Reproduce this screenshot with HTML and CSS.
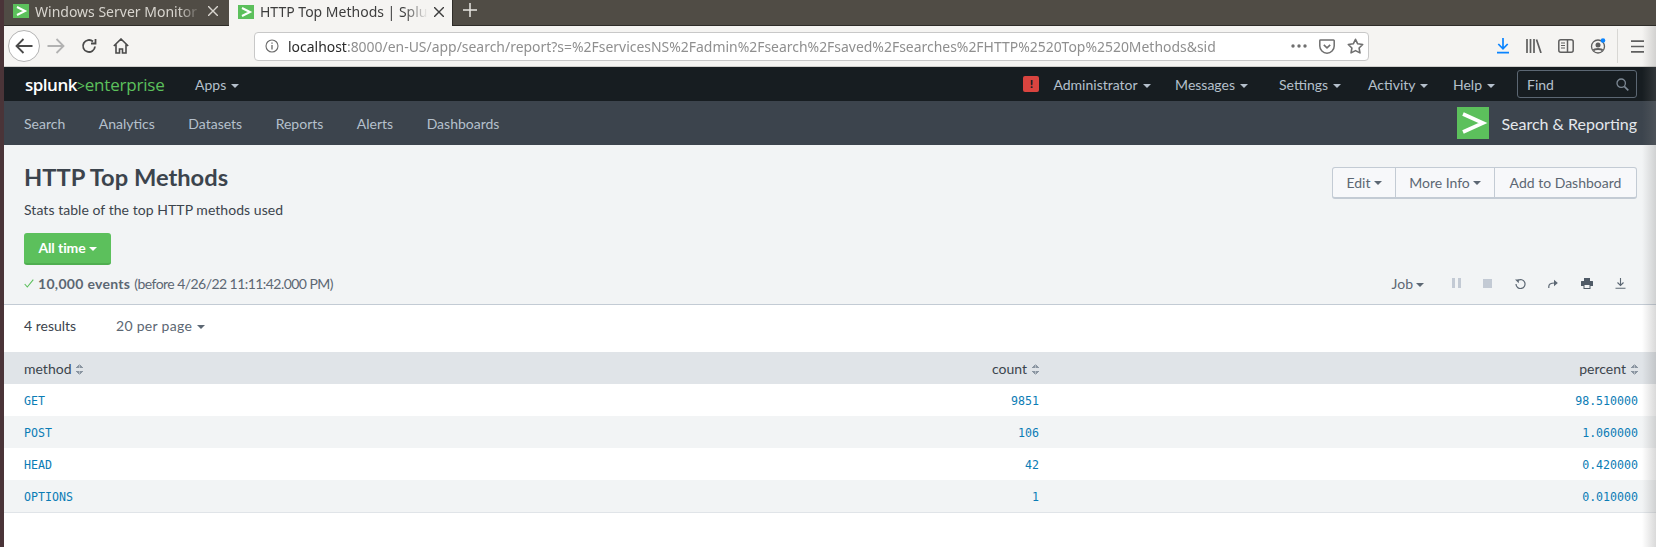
FILE: index.html
```html
<!DOCTYPE html>
<html lang="en">

<head>
  <meta charset="UTF-8">
  <title>HTTP Top Methods | Splunk</title>
  <link rel="stylesheet" href="styles.css">
</head>

<body>
  <div class="tabstrip">
    <div class="tab">
      <svg class="favicon" viewBox="0 0 16 14"><rect width="16" height="14" fill="#5cc05c"/><path d="M4 3l8 4-8 4" fill="none" stroke="#fff" stroke-width="2"/></svg>
      <span class="tab-title">Windows Server Monitor</span>
      <svg class="tab-close" viewBox="0 0 10 10"><path d="M0 0l10 10M10 0L0 10" stroke="currentColor" stroke-width="1.4"/></svg>
    </div>
    <div class="tab active">
      <svg class="favicon" viewBox="0 0 16 14"><rect width="16" height="14" fill="#5cc05c"/><path d="M4 3l8 4-8 4" fill="none" stroke="#fff" stroke-width="2"/></svg>
      <span class="tab-title">HTTP Top Methods | Splu</span>
      <svg class="tab-close" viewBox="0 0 10 10"><path d="M0 0l10 10M10 0L0 10" stroke="currentColor" stroke-width="1.4"/></svg>
    </div>
    <svg class="new-tab" viewBox="0 0 14 14"><path d="M7 0v14M0 7h14" stroke="#e8e6e2" stroke-width="1.5"/></svg>
  </div>

  <div class="toolbar">
    <div class="back-btn">
      <svg width="18" height="16" viewBox="0 0 18 16"><path d="M8.5 1L1.5 8l7 7M2 8h15.5" fill="none" stroke="#4a4a4a" stroke-width="1.8"/></svg>
    </div>
    <svg class="tool-forward" width="18" height="16" viewBox="0 0 18 16"><path d="M9.5 1l7 7-7 7M16 8H.5" fill="none" stroke="#b2b2b2" stroke-width="1.8"/></svg>
    <svg class="tool-reload" width="16" height="16" viewBox="0 0 16 16"><path d="M14 8.5A6 6 0 1 1 12 3.5M14.500 1v4.500H10" fill="none" stroke="#4a4a4a" stroke-width="1.8"/></svg>
    <svg class="tool-home" width="16" height="16" viewBox="0 0 16 16"><path d="M.8 8L8 1l7.2 7M3 6.5V15h3.5v-4h3v4H13V6.5" fill="none" stroke="#4a4a4a" stroke-width="1.6"/></svg>
    <div class="urlbar">
      <svg class="url-info" width="14" height="14" viewBox="0 0 14 14"><circle cx="7" cy="7" r="6" fill="none" stroke="#6a6a6a" stroke-width="1.1"/><path d="M7 6v4.4M7 3.4v1.4" stroke="#6a6a6a" stroke-width="1.3"/></svg>
      <div class="url-text"><span class="url-host">localhost</span>:8000/en-US/app/search/report?s=%2FservicesNS%2Fadmin%2Fsearch%2Fsaved%2Fsearches%2FHTTP%2520Top%2520Methods&amp;sid</div>
      <svg class="url-dots" width="16" height="4" viewBox="0 0 16 4"><circle cx="2" cy="2" r="1.7" fill="#6f6f6f"/><circle cx="8" cy="2" r="1.7" fill="#6f6f6f"/><circle cx="14" cy="2" r="1.7" fill="#6f6f6f"/></svg>
      <svg class="url-pocket" width="16" height="15" viewBox="0 0 16 15"><path d="M1.500 1h13a.7.7 0 0 1 .7.7V7a7.200 7.200 0 0 1-14.400 0V1.700A.7.7 0 0 1 1.500 1z" fill="none" stroke="#6f6f6f" stroke-width="1.5"/><path d="M4.800 5.800L8 8.800l3.200-3" fill="none" stroke="#6f6f6f" stroke-width="1.6"/></svg>
      <svg class="url-star" width="17" height="16" viewBox="0 0 17 16"><path d="M8.500 1.300l2.200 4.500 5 .7-3.600 3.500.85 4.900-4.450-2.300-4.450 2.300.85-4.900L1.300 6.500l5-.7z" fill="none" stroke="#6f6f6f" stroke-width="1.6" stroke-linejoin="round"/></svg>
    </div>
    <div class="tool-right">
      <svg width="14" height="16" viewBox="0 0 14 16"><path d="M7 0v10.500M2.300 6L7 10.800 11.700 6M1 14.700h12" fill="none" stroke="#0a84ff" stroke-width="1.7"/></svg>
      <svg width="16" height="14" viewBox="0 0 16 14"><path d="M1 0v14M4.500 0v14M8 0v14M10.500 .5l4.500 13.500" fill="none" stroke="#5f5f5f" stroke-width="1.7"/></svg>
      <svg width="16" height="14" viewBox="0 0 16 14"><rect x=".8" y=".8" width="14.400" height="12.400" rx="2" fill="none" stroke="#5f5f5f" stroke-width="1.5"/><path d="M9.500 1v12" stroke="#5f5f5f" stroke-width="1.5"/><path d="M3 4h4M3 6.500h4M3 9h4" stroke="#5f5f5f"/></svg>
      <svg width="16" height="16" viewBox="0 0 16 16"><circle cx="8" cy="8.500" r="6.500" fill="none" stroke="#5f5f5f" stroke-width="1.3"/><circle cx="8" cy="7" r="2.500" fill="#5f5f5f"/><path d="M3.500 12.500c1-2 8-2 9 0" fill="none" stroke="#5f5f5f" stroke-width="1.8"/><circle cx="13" cy="2.500" r="2.300" fill="#0a84ff"/></svg>
      <span class="tool-sep"></span>
      <svg class="tool-menu" width="13" height="13" viewBox="0 0 13 13"><path d="M0 1.200h13M0 6.500h13M0 11.800h13" stroke="#5f5f5f" stroke-width="1.7"/></svg>
    </div>
  </div>

  <div class="splunk-bar">
    <div class="logo">splunk<span class="logo-green"><span class="logo-gt">&gt;</span>enterprise</span></div>
    <div class="menu-item apps">Apps<i class="caret"></i></div>
    <div class="sys-nav">
      <span class="alert-badge">!</span>
      <div class="menu-item admin">Administrator<i class="caret"></i></div>
      <div class="menu-item messages">Messages<i class="caret"></i></div>
      <div class="menu-item settings">Settings<i class="caret"></i></div>
      <div class="menu-item activity">Activity<i class="caret"></i></div>
      <div class="menu-item help">Help<i class="caret"></i></div>
      <div class="find">
        <span>Find</span>
        <svg width="13" height="13" viewBox="0 0 13 13"><circle cx="5.200" cy="5.200" r="4.200" fill="none" stroke="#7d8894" stroke-width="1.3"/><path d="M8.300 8.300l4 4" stroke="#7d8894" stroke-width="1.7"/></svg>
      </div>
    </div>
  </div>

  <div class="app-bar">
    <a class="app-link">Search</a>
    <a class="app-link">Analytics</a>
    <a class="app-link">Datasets</a>
    <a class="app-link">Reports</a>
    <a class="app-link">Alerts</a>
    <a class="app-link">Dashboards</a>
    <div class="app-name">
      <svg width="32" height="32" viewBox="0 0 32 32"><rect width="32" height="32" fill="#5cc05c"/><path d="M6 7l20 9-20 9" fill="none" stroke="#fff" stroke-width="3.6"/></svg>
      <span>Search &amp; Reporting</span>
    </div>
  </div>

  <div class="report-head">
    <div class="head-top">
      <div>
        <h1>HTTP Top Methods</h1>
        <p class="desc">Stats table of the top HTTP methods used</p>
      </div>
      <div class="btn-group">
        <div class="btn btn-edit">Edit<i class="caret"></i></div>
        <div class="btn btn-more">More Info<i class="caret"></i></div>
        <div class="btn btn-add">Add to Dashboard</div>
      </div>
    </div>
    <div class="time-btn">All time<i class="caret"></i></div>
    <div class="status-row">
      <svg class="check" width="10" height="9" viewBox="0 0 10 9"><path d="M.7 5l2.600 3L9.300 .7" fill="none" stroke="#5cc05c" stroke-width="1.1"/></svg>
      <b class="status-count">10,000 events</b>
      <span class="status-text">(before 4/26/22 11:11:42.000 PM)</span>
      <div class="job-tools">
        <div class="job-menu">Job<i class="caret"></i></div>
        <svg width="9" height="10" viewBox="0 0 9 10"><path d="M0 0h3v10H0zM6 0h3v10H6z" fill="#c3cad4"/></svg>
        <svg width="9" height="9" viewBox="0 0 9 9"><rect width="9" height="9" fill="#c3cad4"/></svg>
        <svg width="11" height="11" viewBox="0 0 11 11"><path d="M3 2.300A4.500 4.500 0 1 1 1 6" fill="none" stroke="#5c6773" stroke-width="1.2"/><path d="M0 1.500h3.800v3.700z" fill="#5c6773"/></svg>
        <svg width="10" height="9" viewBox="0 0 10 9"><path d="M.8 9V7.500C.8 5 3 4 6.500 4" fill="none" stroke="#5c6773" stroke-width="1.2"/><path d="M6 .8L9.800 4 6 7.200z" fill="#5c6773"/></svg>
        <svg width="12" height="11" viewBox="0 0 12 11"><path d="M3 0h6v3h2.500q.5 0 .5.500V8H9.500v3h-7V8H0V3.500Q0 3 .5 3H3z" fill="#4f5a66"/><path d="M3.500 7h5v3h-5z" fill="#f2f4f5"/></svg>
        <svg width="11" height="11" viewBox="0 0 11 11"><path d="M5.500 0v7M2.500 4.500l3 3 3-3M.5 10.300h10" fill="none" stroke="#5c6773" stroke-width="1.1"/></svg>
      </div>
    </div>
  </div>

  <div class="paging">
    <span class="result-count">4 results</span>
    <span class="per-page">20 per page<i class="caret"></i></span>
  </div>

  <table class="results">
    <thead>
      <tr>
        <th>method<i class="sort"></i></th>
        <th class="num col-count">count<i class="sort"></i></th>
        <th class="num col-percent">percent<i class="sort"></i></th>
      </tr>
    </thead>
    <tbody>
      <tr><td>GET</td><td class="num">9851</td><td class="num">98.510000</td></tr>
      <tr><td>POST</td><td class="num">106</td><td class="num">1.060000</td></tr>
      <tr><td>HEAD</td><td class="num">42</td><td class="num">0.420000</td></tr>
      <tr><td>OPTIONS</td><td class="num">1</td><td class="num">0.010000</td></tr>
    </tbody>
  </table>

  <div class="edge-shadow"></div>
</body>

</html>
```

FILE: styles.css
```css
html {
  height: 100%;
  background-color: #fff;
}

body {
  margin: 0;
  height: 547px;
  overflow: hidden;
  border-left: 4px solid #4a3438;
  font-family: "Lato", "Open Sans", sans-serif;
  font-size: 14px;
  color: #3c444d;
  position: relative;
}

.tabstrip {
  display: flex;
  align-items: stretch;
  height: 25px;
  background-color: #504c45;
  border-bottom: 1px solid #2e2c28;
}

.tab {
  width: 225px;
  box-sizing: border-box;
  display: flex;
  align-items: center;
  padding: 0 11px 0 9px;
  color: #d8d5cf;
  font-family: "Noto Sans", sans-serif;
  font-size: 14px;
}

.tab.active {
  width: 224px;
  background-color: #f5f4f2;
  color: #3d3d3d;
  border-right: 1px solid #2e2c28;
  height: 26px;
}

.favicon {
  width: 16px;
  height: 14px;
  flex: none;
  margin-right: 6px;
  margin-bottom: 3px;
}

.tab-title {
  flex: 1;
  white-space: nowrap;
  margin-bottom: 3px;
  -webkit-mask-image: linear-gradient(to left, transparent, #000 24px);
  mask-image: linear-gradient(to left, transparent, #000 24px);
}

.tab-close {
  width: 10px;
  height: 10px;
  flex: none;
  margin-left: 6px;
  margin-bottom: 3px;
}

.new-tab {
  width: 14px;
  height: 14px;
  margin: 3px 0 0 10px;
}

.toolbar {
  display: flex;
  align-items: center;
  height: 40px;
  background-color: #f5f4f2;
  border-bottom: 1px solid #d0cfcc;
}

.back-btn {
  width: 32px;
  height: 32px;
  box-sizing: border-box;
  margin-left: 4px;
  border: 1px solid #b4b4b4;
  border-radius: 50%;
  background-color: #fff;
  display: flex;
  align-items: center;
  justify-content: center;
}

.tool-forward {
  margin-left: 7px;
}

.tool-reload {
  margin-left: 16px;
}

.tool-home {
  margin-left: 16px;
}

.urlbar {
  width: 1115px;
  height: 29px;
  box-sizing: border-box;
  margin-left: 125px;
  background-color: #fff;
  border: 1px solid #c8c8c8;
  border-radius: 4px;
  display: flex;
  align-items: center;
  padding: 0 4px 0 10px;
}

.url-text {
  flex: 1;
  margin: 0 34px 0 9px;
  white-space: nowrap;
  color: #8f8f8f;
  font-family: "Noto Sans", sans-serif;
  font-size: 13.95px;
  -webkit-mask-image: linear-gradient(to left, transparent, #000 24px);
  mask-image: linear-gradient(to left, transparent, #000 24px);
}

.url-host {
  color: #2a2a2a;
}

.url-pocket {
  margin-left: 12px;
}

.url-star {
  margin-left: 12px;
}

.tool-right {
  display: flex;
  align-items: center;
  gap: 16px;
  margin-left: 127px;
}

.tool-sep {
  width: 1px;
  height: 34px;
  background-color: #d8d7d4;
  margin-left: -5px;
}

.tool-menu {
  margin-left: -3px;
}

.splunk-bar {
  display: flex;
  align-items: center;
  height: 34px;
  background-color: #171d21;
  color: #b5c0cc;
  padding-left: 21px;
}

.logo {
  width: 170px;
  color: #fff;
  font-family: "Open Sans", sans-serif;
  font-size: 17px;
  font-weight: 600;
  letter-spacing: -0.5px;
}

.logo-green {
  color: #5cc05c;
  font-weight: 400;
  letter-spacing: -0.2px;
}

.logo-gt {
  font-size: 14px;
}

.menu-item {
  white-space: nowrap;
}

.caret {
  display: inline-block;
  width: 0;
  height: 0;
  margin-left: 5px;
  vertical-align: 2px;
  border-left: 4px solid transparent;
  border-right: 4px solid transparent;
  border-top: 4px solid currentColor;
}

.sys-nav {
  display: flex;
  align-items: center;
  margin-left: auto;
  margin-right: 19px;
}

.alert-badge {
  width: 16px;
  height: 16px;
  border-radius: 2px;
  background-color: #d9443f;
  color: #171d21;
  font-weight: 900;
  font-size: 12px;
  line-height: 16px;
  text-align: center;
  margin-right: 14px;
}

.admin {
  margin-right: 24.5px;
}

.messages {
  margin-right: 31px;
}

.settings {
  margin-right: 27px;
}

.activity {
  margin-right: 24.5px;
}

.help {
  margin-right: 22px;
}

.find {
  width: 120px;
  height: 28px;
  box-sizing: border-box;
  border: 1px solid #5c6773;
  border-radius: 3px;
  display: flex;
  align-items: center;
  justify-content: space-between;
  padding: 0 7px 0 9px;
}

.app-bar {
  display: flex;
  align-items: center;
  height: 44px;
  background-color: #3c444d;
  color: #b5c0cc;
  padding-left: 20px;
}

.app-link {
  margin-right: 33.5px;
}

.app-name {
  margin-left: auto;
  margin-right: 19px;
  display: flex;
  align-items: center;
  gap: 12px;
  color: #e4e8ec;
  font-size: 16px;
}

.report-head {
  height: 160px;
  box-sizing: border-box;
  background-color: #f2f4f5;
  border-bottom: 1px solid #c3cbd4;
  padding: 19px 19px 0 20px;
}

.head-top {
  display: flex;
  justify-content: space-between;
  align-items: flex-start;
  height: 69px;
}

h1 {
  margin: 0;
  font-size: 23.7px;
  font-weight: 700;
  line-height: 26px;
  color: #3c444d;
}

.desc {
  margin: 11px 0 0;
  line-height: 18px;
  letter-spacing: 0.05px;
}

.btn-group {
  display: flex;
  height: 32px;
  box-sizing: border-box;
  margin-top: 3px;
  border: 1px solid #c3cbd4;
  border-bottom-width: 2px;
  border-radius: 3px;
  background-color: #f7f8fa;
  color: #5c6773;
}

.btn {
  display: flex;
  align-items: center;
  justify-content: center;
  box-sizing: border-box;
  border-left: 1px solid #c3cbd4;
}

.btn:first-child {
  border-left: none;
}

.btn .caret {
  margin-left: 3px;
}

.btn-edit {
  width: 62px;
}

.btn-more {
  width: 99px;
}

.btn-add {
  width: 142px;
}

.time-btn {
  width: 87px;
  height: 32px;
  box-sizing: border-box;
  background-color: #5cc05c;
  border-bottom: 2px solid #4fae50;
  border-radius: 3px;
  color: #fff;
  font-weight: 700;
  letter-spacing: -0.1px;
  text-align: center;
  line-height: 30px;
}

.time-btn .caret {
  margin-left: 3px;
}

.status-row {
  display: flex;
  align-items: center;
  margin-top: 9px;
  height: 18px;
  color: #5c6773;
}

.check {
  margin-right: 4px;
}

.status-count {
  letter-spacing: 0.3px;
  margin-right: 4px;
}

.status-text {
  letter-spacing: -0.55px;
}

.job-tools {
  margin-left: auto;
  display: flex;
  align-items: center;
  gap: 22.5px;
  padding-right: 11px;
}

.job-menu {
  margin-right: 5px;
}

.job-menu .caret {
  margin-left: 3px;
}

.paging {
  display: flex;
  align-items: center;
  height: 47px;
  box-sizing: border-box;
  padding: 0 0 6px 20px;
}

.result-count {
  width: 92px;
}

.per-page {
  color: #5c6773;
  letter-spacing: 0.3px;
}

.results {
  width: 100%;
  table-layout: fixed;
  border-collapse: collapse;
  border-bottom: 1px solid #e0e4e8;
}

.results th {
  height: 32px;
  padding: 0 18px 0 20px;
  background-color: #e0e4e8;
  font-weight: 400;
  text-align: left;
}

.results td {
  height: 32px;
  padding: 2px 18px 0 20px;
  box-sizing: border-box;
  font-family: "DejaVu Sans Mono", monospace;
  font-size: 11.6px;
  color: #0b7cb5;
}

.results tbody tr:nth-child(even) td {
  background-color: #f2f4f5;
}

.results .num {
  text-align: right;
}

.results .col-count {
  width: 400px;
  text-align: right;
}

.results .col-percent {
  width: 561px;
  text-align: right;
}

.sort {
  display: inline-block;
  width: 7px;
  height: 11px;
  margin-left: 5px;
  vertical-align: -1px;
  background:
    linear-gradient(to bottom right, transparent 50%, #8a95a1 50%) 0 0 / 3.5px 4px no-repeat,
    linear-gradient(to bottom left, transparent 50%, #8a95a1 50%) 3.5px 0 / 3.5px 4px no-repeat,
    linear-gradient(to top right, transparent 50%, #8a95a1 50%) 0 7px / 3.5px 4px no-repeat,
    linear-gradient(to top left, transparent 50%, #8a95a1 50%) 3.5px 7px / 3.5px 4px no-repeat;
}

.edge-shadow {
  position: absolute;
  top: 26px;
  right: 0;
  bottom: 0;
  width: 14px;
  background: linear-gradient(to right, rgba(120, 120, 120, 0), rgba(120, 120, 120, 0.28));
}
```
